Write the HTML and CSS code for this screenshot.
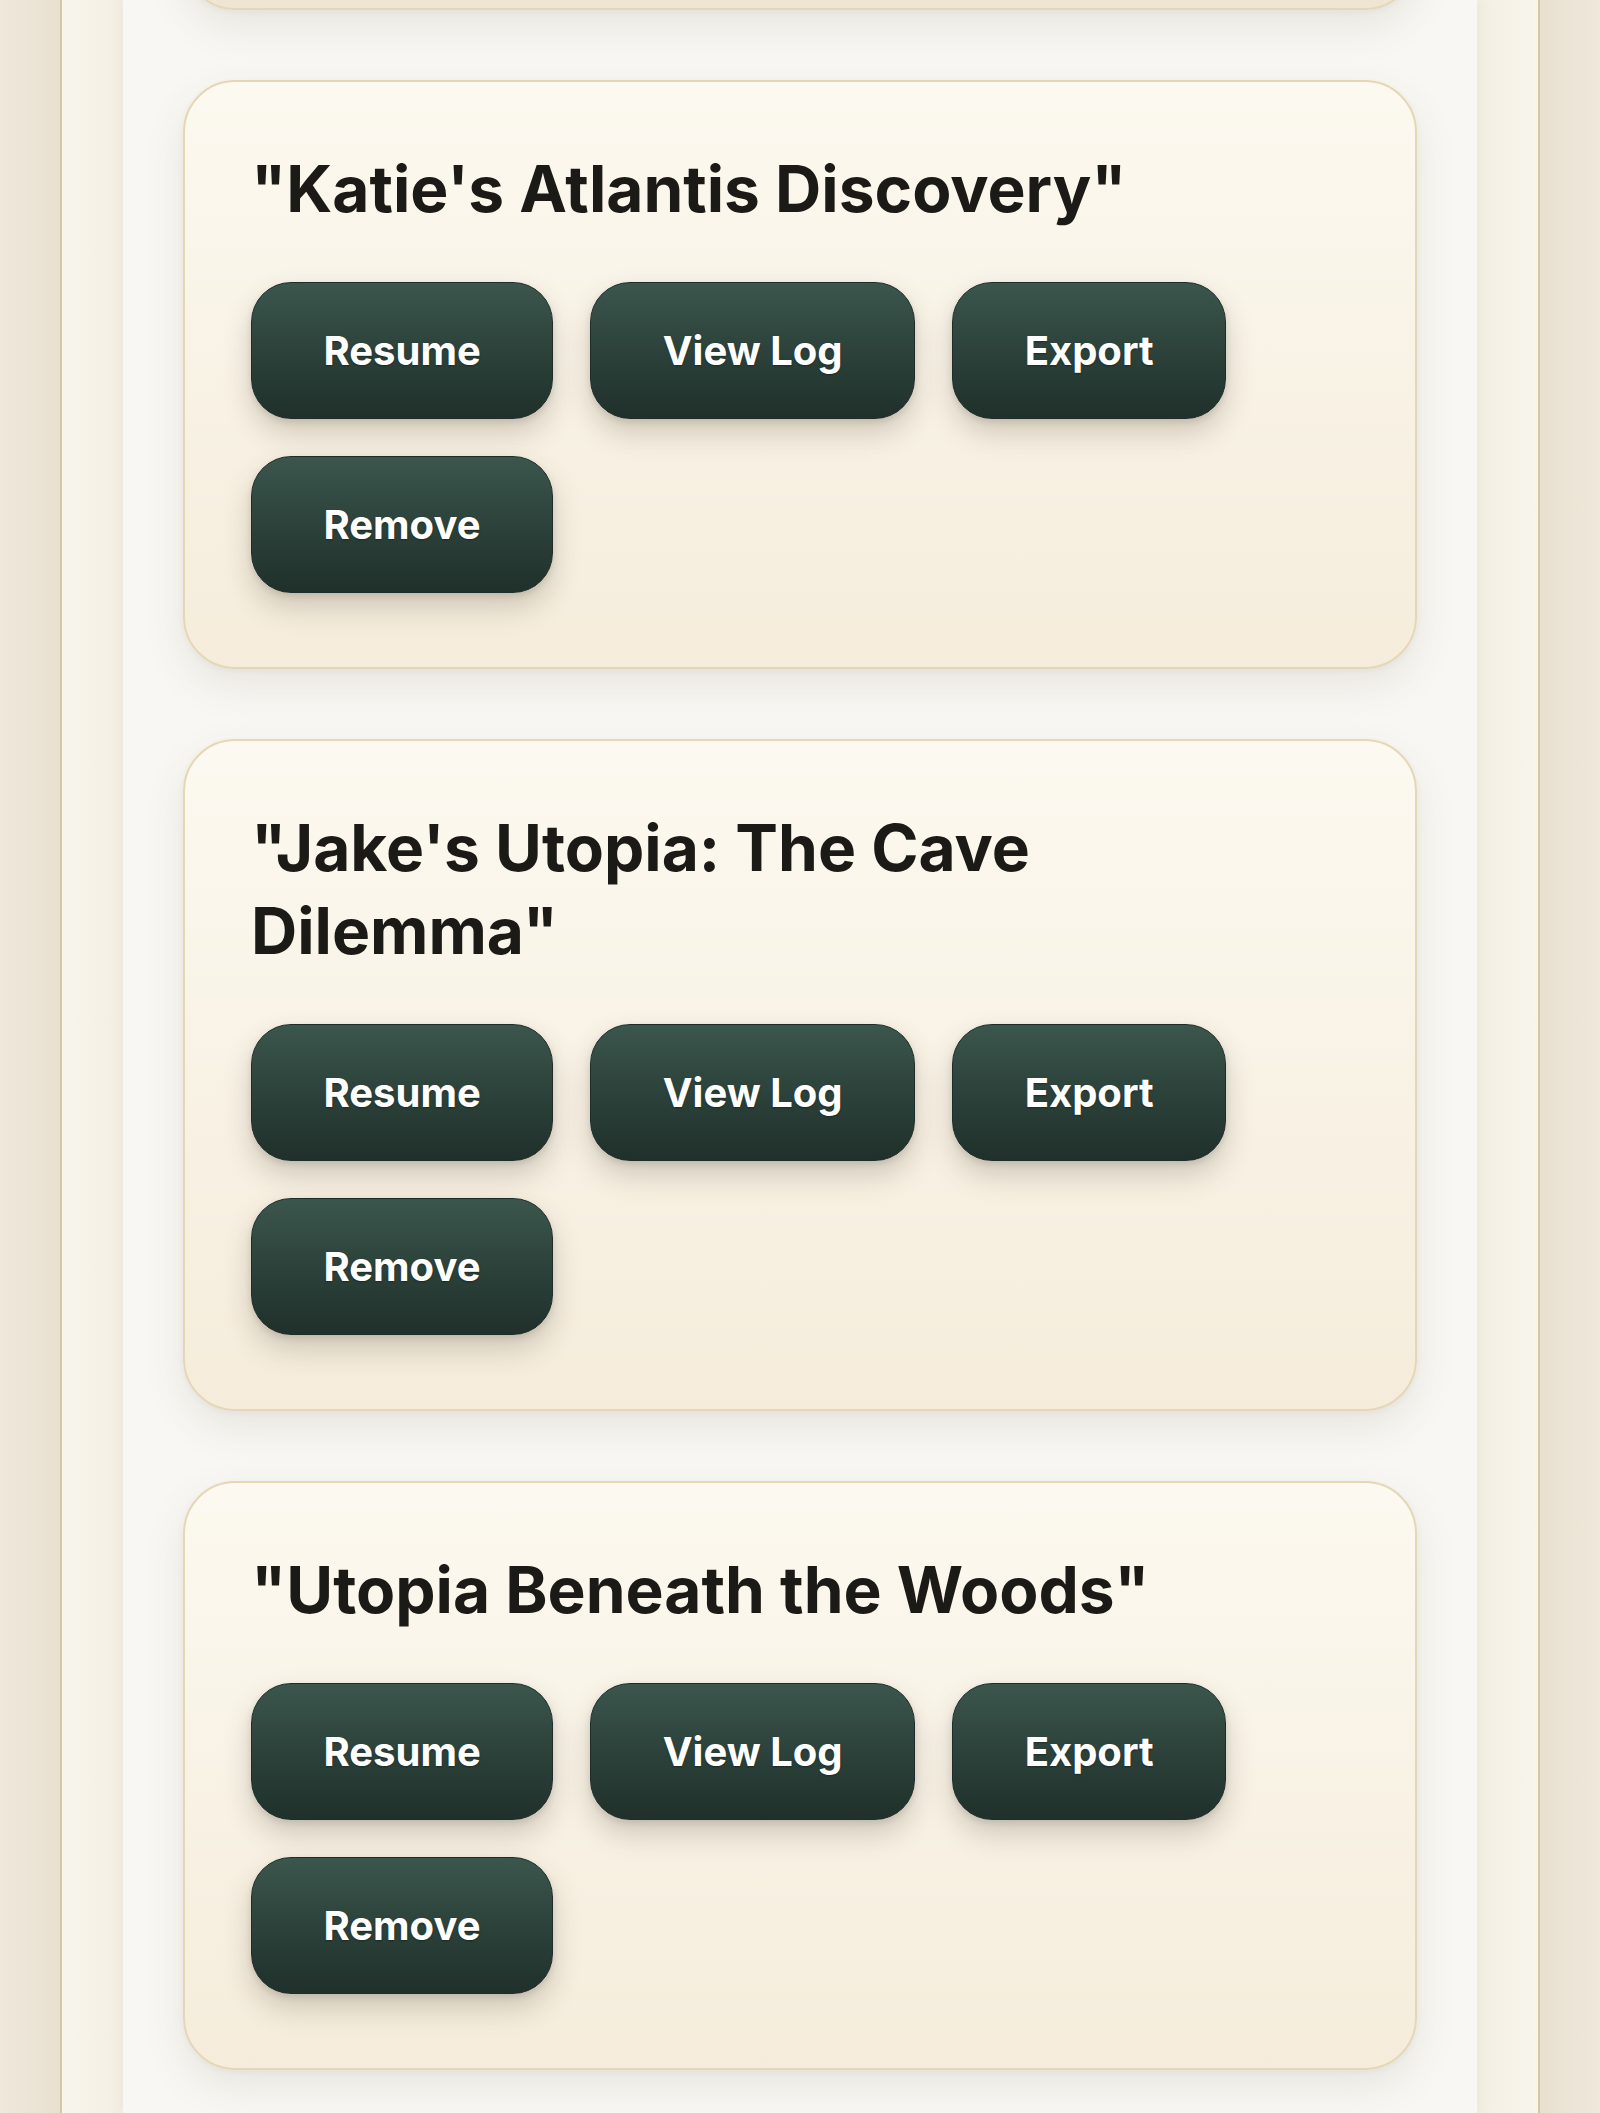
FILE: index.html
```html
<!DOCTYPE html>
<html lang="en">
<head>
<meta charset="utf-8">
<title>Saved Adventures</title>
<link rel="stylesheet" href="styles.css">
</head>
<body>
<div class="frame">
  <div class="panel">
    <div class="list">
      <section class="card card-prev"></section>
      <section class="card">
        <h2 class="title">"Katie's Atlantis Discovery"</h2>
        <div class="actions">
          <button class="btn">Resume</button>
          <button class="btn">View Log</button>
          <button class="btn">Export</button>
          <button class="btn">Remove</button>
        </div>
      </section>
      <section class="card">
        <h2 class="title">"Jake's Utopia: The Cave Dilemma"</h2>
        <div class="actions">
          <button class="btn">Resume</button>
          <button class="btn">View Log</button>
          <button class="btn">Export</button>
          <button class="btn">Remove</button>
        </div>
      </section>
      <section class="card">
        <h2 class="title">"Utopia Beneath the Woods"</h2>
        <div class="actions">
          <button class="btn">Resume</button>
          <button class="btn">View Log</button>
          <button class="btn">Export</button>
          <button class="btn">Remove</button>
        </div>
      </section>
    </div>
  </div>
</div>
</body>
</html>
```
FILE: styles.css
```css
html, body {
  margin: 0;
  padding: 0;
}
body {
  background: linear-gradient(90deg, #efe8db 0%, #e9e0cf 3.7%, #e9e0cf 96.3%, #efe8db 100%);
  font-family: Inter, "Noto Sans", sans-serif;
  min-height: 2113px;
  overflow: hidden;
}
.frame {
  margin: 0 60px;
  min-height: 2113px;
  border-left: 2px solid #d6c6a6;
  border-right: 2px solid #d6c6a6;
  background: linear-gradient(90deg, #f8f5ec 0%, #f3eee2 4.5%, #f7f4ec 50%, #f3eee2 95.5%, #f8f5ec 100%);
  padding: 0 61px;
  box-sizing: border-box;
}
.panel {
  background: #f8f7f3;
  min-height: 2113px;
  padding: 0 60px;
  box-shadow: 0 0 14px rgba(120, 100, 60, 0.08);
}
.list {
  display: flex;
  flex-direction: column;
  gap: 70px;
}
.card {
  background: linear-gradient(180deg, #fcf9f0 0%, #f5ecdb 100%);
  border: 2px solid #e5d6b6;
  border-radius: 52px;
  padding: 65px 66px 74px;
  box-shadow: 0 16px 40px rgba(90, 80, 60, 0.10), 0 2px 6px rgba(90, 80, 60, 0.05);
}
.card-prev {
  height: 200px;
  margin-top: -194px;
  padding: 0;
  background: linear-gradient(180deg, #f3ead8 0%, #efe5d2 100%);
}
.title {
  margin: 0 0 52px;
  max-width: 1010px;
  font-size: 64px;
  line-height: 83px;
  font-weight: 700;
  color: #1b1a16;
  letter-spacing: 0;
}
.actions {
  display: flex;
  flex-wrap: wrap;
  gap: 37px;
}
.btn {
  font-family: Inter, "Noto Sans", sans-serif;
  font-size: 40px;
  line-height: 47px;
  font-weight: 700;
  color: #ffffff;
  padding: 44px 71.5px;
  border: 1px solid #1f2c28;
  border-radius: 40px;
  background: linear-gradient(180deg, #3b564d 0%, #2c423b 50%, #20302b 100%);
  box-shadow: 0 14px 28px rgba(70, 60, 40, 0.22), 0 3px 6px rgba(40, 40, 30, 0.12);
  text-shadow: 0 1px 2px rgba(0, 0, 0, 0.35);
  cursor: pointer;
}
```
